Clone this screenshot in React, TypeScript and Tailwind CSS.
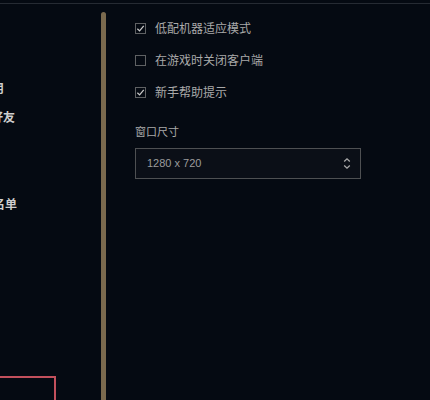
import React from 'react';

const font = { fontFamily: '"Noto Sans CJK SC", "Liberation Sans", sans-serif' };

type NavItem = { label: string; shift: string };

// the nav column is cropped at the left edge in the screenshot
const navItems: NavItem[] = [
  { label: '通用', shift: 'ml-[-20px]' },
  { label: '聊天与好友', shift: 'ml-[-45px]' },
  { label: '音效', shift: 'ml-[-40px]' },
  { label: '语音', shift: 'ml-[-40px]' },
  { label: '屏蔽名单', shift: 'ml-[-31px]' },
];

const options = [
  { label: '低配机器适应模式', checked: true },
  { label: '在游戏时关闭客户端', checked: false },
  { label: '新手帮助提示', checked: true },
];

function Checkbox({ checked }: { checked: boolean }) {
  return (
    <div className="w-[11px] h-[11px] border border-[#5f6163] flex items-center justify-center shrink-0">
      {checked && (
        <svg width="9" height="9" viewBox="0 0 10 10" fill="none">
          <path d="M1.5 5.2 L4 7.6 L8.6 2" stroke="#c9c9c9" strokeWidth="1.4" />
        </svg>
      )}
    </div>
  );
}

export default function App() {
  return (
    <div className="w-[430px] h-[400px] bg-[#050a12] overflow-hidden relative pt-[3px]" style={font}>
      <div className="border-t border-[#262b33] h-full flex">
        <div className="w-[101px] shrink-0 pt-[76px] flex flex-col gap-[13px] overflow-hidden">
          {navItems.map((item) => (
            <div
              key={item.label}
              className={`${item.shift} text-[12px] leading-[16px] font-bold text-[#cfcfcf] whitespace-nowrap`}
            >
              {item.label}
            </div>
          ))}
        </div>

        <div className="w-[5px] shrink-0 mt-[8px] bg-[#7b6a4e] rounded-t-full" />

        <div className="flex-1 pl-[29px] pt-[18px]">
          <div className="flex flex-col gap-[20px]">
            {options.map((o) => (
              <div key={o.label} className="flex items-center gap-[9px] h-[12px]">
                <Checkbox checked={o.checked} />
                <span className="text-[12px] leading-[12px] text-[#a9a9a9]">{o.label}</span>
              </div>
            ))}
          </div>

          <div className="mt-[27px] text-[11px] leading-[12px] text-[#a9a9a9]">窗口尺寸</div>

          <div className="mt-[11px] w-[226px] h-[31px] border border-[#4e5052] bg-[#0b0f17] flex items-center justify-between pl-[11px] pr-[9px]">
            <span className="text-[11px] text-[#9c9c9c]" style={{ fontFamily: '"Liberation Sans", sans-serif' }}>
              1280 x 720
            </span>
            <svg width="8" height="13" viewBox="0 0 8 13" fill="none">
              <path d="M1.2 4.5 L4 1.8 L6.8 4.5" stroke="#a9a9a9" strokeWidth="1.3" />
              <path d="M1.2 8.5 L4 11.2 L6.8 8.5" stroke="#a9a9a9" strokeWidth="1.3" />
            </svg>
          </div>
        </div>
      </div>

      {/* red highlight frame at the bottom left */}
      <div className="absolute left-[-10px] top-[376px] w-[66px] h-[40px] border-2 border-[#c2505c]" />
    </div>
  );
}
